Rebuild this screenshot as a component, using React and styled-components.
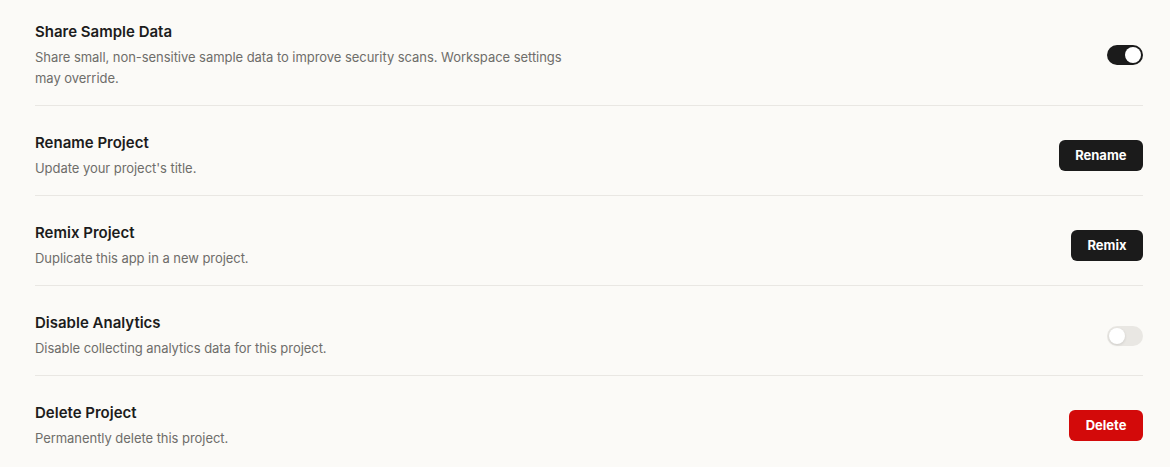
import React, { useState } from "react";
import styled, { createGlobalStyle } from "styled-components";

const Global = createGlobalStyle`
  html, body { margin: 0; padding: 0; background: #fbfaf7; }
  body { font-family: Inter, "Noto Sans", sans-serif; -webkit-font-smoothing: antialiased; }
`;

const Page = styled.div`
  padding: 0 27px 0 35px;
  background: #fbfaf7;
`;

const Row = styled.div`
  display: flex;
  align-items: center;
  justify-content: space-between;
  gap: 24px;
  padding: ${(p) => (p.$first ? "21px" : "26px")} 0 16px;
  border-bottom: ${(p) => (p.$last ? "none" : "1px solid #e9e7e3")};
`;

const Text = styled.div`
  display: flex;
  flex-direction: column;
  gap: 4px;
  max-width: 545px;
`;

const Title = styled.div`
  font-size: 15px;
  line-height: 22px;
  font-weight: 600;
  color: #1c1c1c;
`;

const Desc = styled.div`
  font-size: 13px;
  line-height: 21px;
  color: #6e6d6a;
  letter-spacing: -0.05px;
`;

const Button = styled.button`
  height: 31px;
  padding: 0 16.5px;
  margin-top: -1px;
  border: none;
  border-radius: 6px;
  font-family: inherit;
  font-size: 13px;
  font-weight: 700;
  color: #ffffff;
  background: ${(p) => (p.$danger ? "#d30a0a" : "#1b1b1b")};
  cursor: pointer;
  flex-shrink: 0;
`;

const Track = styled.button`
  width: 36px;
  height: 20px;
  border-radius: 10px;
  border: none;
  padding: 2px;
  display: flex;
  justify-content: ${(p) => (p.$on ? "flex-end" : "flex-start")};
  align-items: center;
  background: ${(p) => (p.$on ? "#1b1b1b" : "#e9e7e3")};
  cursor: pointer;
  flex-shrink: 0;
`;

const Knob = styled.span`
  width: 16px;
  height: 16px;
  border-radius: 50%;
  background: #ffffff;
  box-shadow: 0 1px 3px rgba(0, 0, 0, 0.12);
`;

function Toggle({ initial }) {
  const [on, setOn] = useState(initial);
  return (
    <Track $on={on} onClick={() => setOn(!on)} aria-pressed={on}>
      <Knob />
    </Track>
  );
}

const rows = [
  {
    title: "Share Sample Data",
    desc: "Share small, non-sensitive sample data to improve security scans. Workspace settings may override.",
    control: <Toggle initial={true} />,
  },
  {
    title: "Rename Project",
    desc: "Update your project's title.",
    control: <Button>Rename</Button>,
  },
  {
    title: "Remix Project",
    desc: "Duplicate this app in a new project.",
    control: <Button>Remix</Button>,
  },
  {
    title: "Disable Analytics",
    desc: "Disable collecting analytics data for this project.",
    control: <Toggle initial={false} />,
  },
  {
    title: "Delete Project",
    desc: "Permanently delete this project.",
    control: <Button $danger>Delete</Button>,
  },
];

export default function App() {
  return (
    <>
      <Global />
      <Page>
        {rows.map((r, i) => (
          <Row key={r.title} $first={i === 0} $last={i === rows.length - 1}>
            <Text>
              <Title>{r.title}</Title>
              <Desc>{r.desc}</Desc>
            </Text>
            {r.control}
          </Row>
        ))}
      </Page>
    </>
  );
}
